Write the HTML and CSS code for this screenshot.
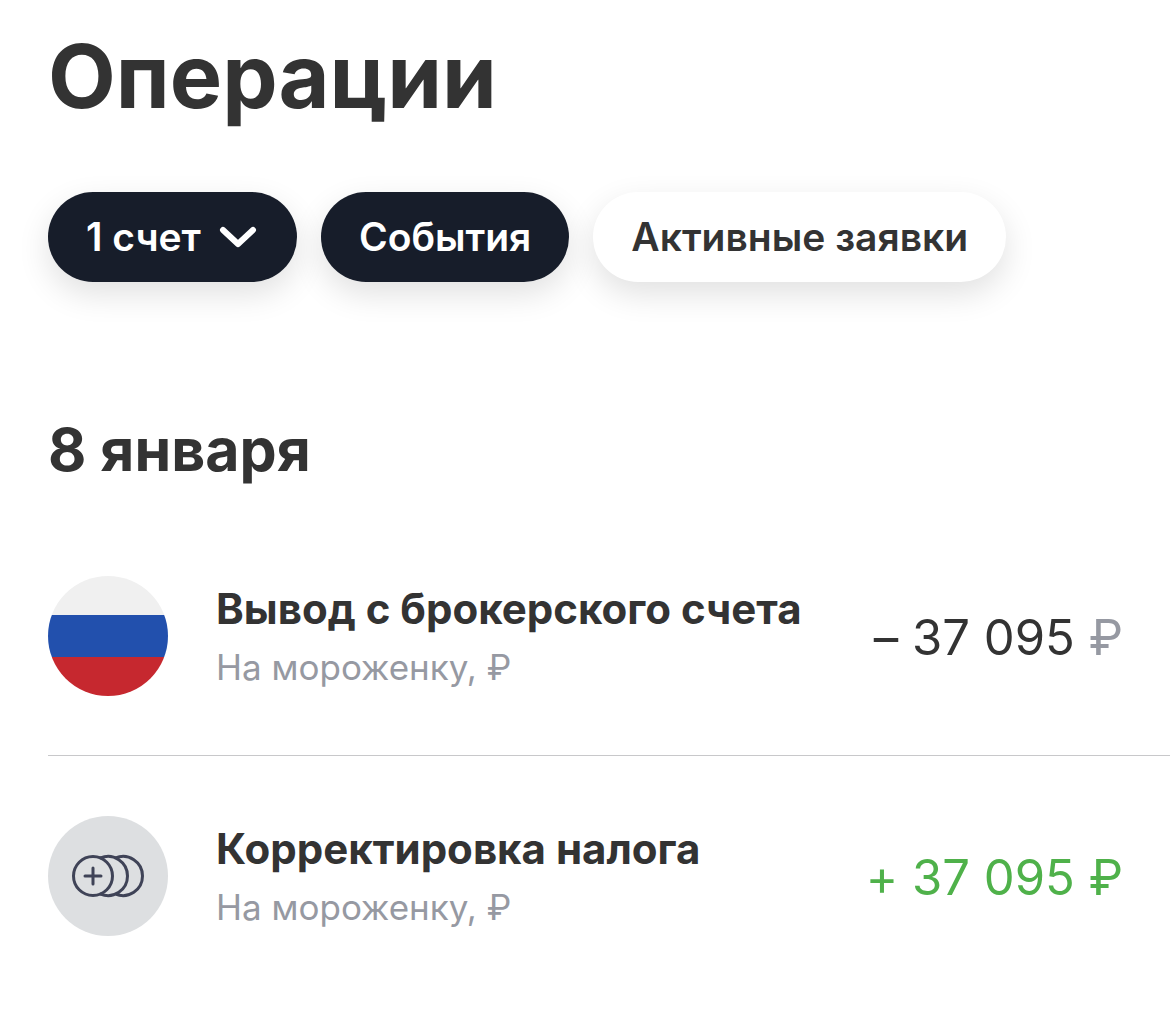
FILE: index.html
```html
<!DOCTYPE html>
<html lang="ru">
<head>
<meta charset="utf-8">
<meta name="viewport" content="width=device-width, initial-scale=1">
<title>Операции</title>
<link rel="stylesheet" href="styles.css">
</head>
<body>
<main class="page">
  <h1 class="title">Операции</h1>
  <div class="filters">
    <button type="button" class="chip chip-dark">1 счет
      <svg class="chevron" viewBox="0 0 40 24" aria-hidden="true"><path d="M4 5 19 19 34 5"/></svg>
    </button>
    <button type="button" class="chip chip-dark">События</button>
    <button type="button" class="chip">Активные заявки</button>
  </div>
  <section>
    <h2 class="date">8 января</h2>
    <ul class="list">
      <li class="row">
        <svg class="avatar" viewBox="0 0 120 120" aria-hidden="true">
          <clipPath id="disc"><circle cx="60" cy="60" r="60"/></clipPath>
          <g clip-path="url(#disc)">
            <path fill="#f0f0f0" d="M0 0h120v39H0z"/>
            <path fill="#2250ad" d="M0 39h120v42H0z"/>
            <path fill="#c6282f" d="M0 81h120v39H0z"/>
          </g>
        </svg>
        <div class="info">
          <h3 class="name">Вывод с брокерского счета</h3>
          <p class="account">На мороженку, ₽</p>
        </div>
        <p class="amount">– 37 095 <span class="currency">₽</span></p>
      </li>
      <li class="row">
        <svg class="avatar" viewBox="0 0 120 120" aria-hidden="true">
          <circle cx="60" cy="60" r="60" fill="#dddfe1"/>
          <g class="coins">
            <circle cx="45" cy="60" r="19.5"/>
            <path d="M37 60h16M45 52v16"/>
            <path d="M52.5 42a19.5 19.5 0 1 1 0 36M67.5 42a19.5 19.5 0 1 1 0 36"/>
          </g>
        </svg>
        <div class="info">
          <h3 class="name">Корректировка налога</h3>
          <p class="account">На мороженку, ₽</p>
        </div>
        <p class="amount amount-in">+ 37 095 ₽</p>
      </li>
    </ul>
  </section>
</main>
</body>
</html>
```
FILE: styles.css
```css
* { box-sizing: border-box; }
body { margin: 0; background: #fff; color: #333; font-family: Inter, "Liberation Sans", sans-serif; }
h1, h2, h3, p, ul { margin: 0; padding: 0; }
.page { padding: 20px 0 28px 48px; }
.title { font-size: 88px; line-height: 112px; font-weight: 700; }
.filters { display: flex; gap: 24px; margin-top: 60px; }
.chip { display: flex; align-items: center; gap: 18px; height: 90px; padding: 0 38px; border: 0; border-radius: 45px; background: #fff; color: #333; font: 600 39px/48px Inter, "Liberation Sans", sans-serif; white-space: nowrap; box-shadow: 0 12px 32px rgba(0, 0, 0, .12); }
.chip-dark { background: #171d2a; color: #fff; }
.chevron { width: 40px; height: 24px; fill: none; stroke: #fff; stroke-width: 6px; stroke-linecap: round; stroke-linejoin: round; }
.date { margin-top: 130px; font-size: 59px; line-height: 76px; font-weight: 700; }
.list { margin-top: 28px; list-style: none; }
.row { display: flex; align-items: center; padding: 60px 47px 59px 0; border-bottom: 1px solid #c8c8ca; }
.row:last-child { border-bottom: 0; }
.avatar { flex: none; width: 120px; height: 120px; margin-right: 48px; }
.coins { fill: none; stroke: #3f4357; stroke-width: 3px; stroke-linecap: round; }
.info { flex: 1; min-width: 0; padding-top: 4px; }
.name { font-size: 42px; line-height: 58px; font-weight: 700; }
.account { font-size: 35px; line-height: 58px; color: #9699a2; }
.amount { padding-top: 4px; font-size: 49px; line-height: 60px; font-feature-settings: "calt" 0; white-space: nowrap; }
.currency { color: #9699a2; }
.amount-in { color: #4fb14a; }
```
